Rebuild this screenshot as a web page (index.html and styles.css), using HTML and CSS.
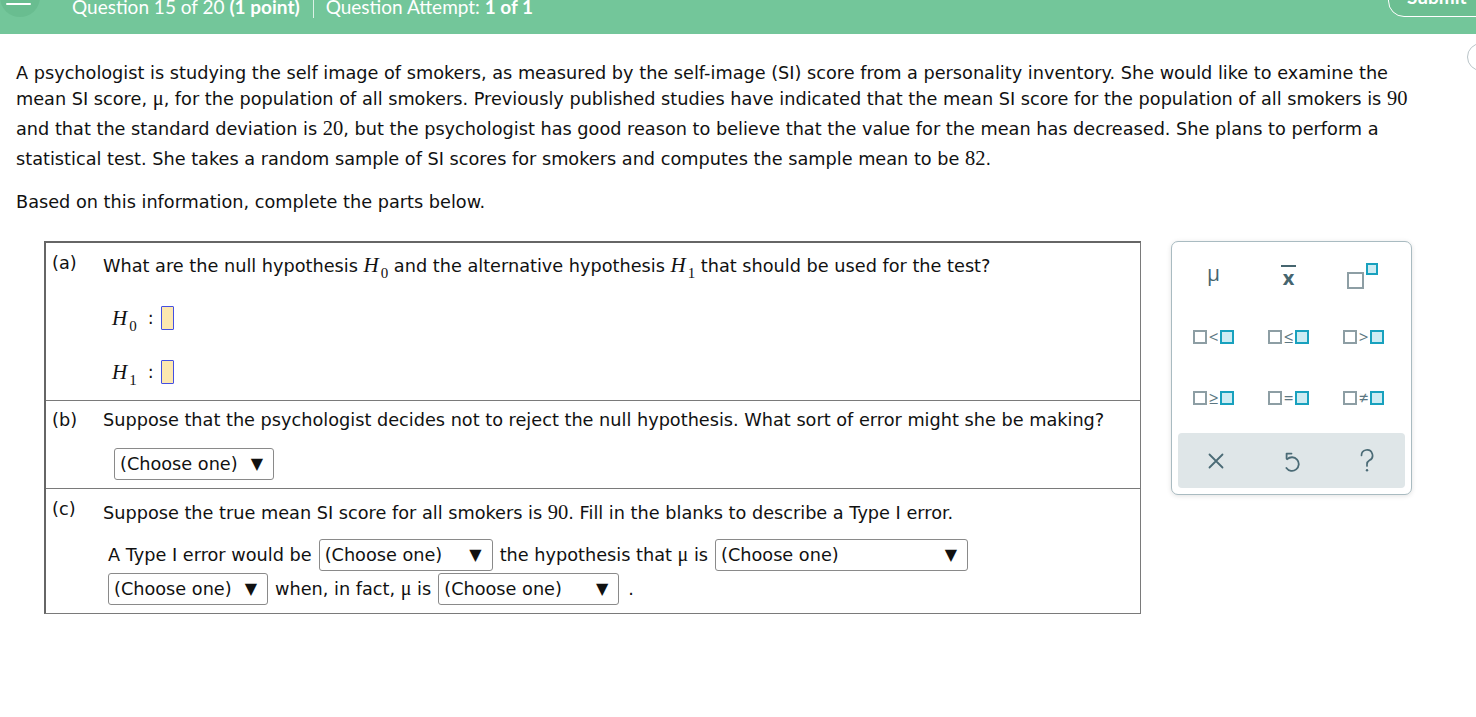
FILE: index.html
```html
<!DOCTYPE html>
<html lang="en">
<head>
<meta charset="utf-8">
<title>Question 15 of 20</title>
<link rel="stylesheet" href="styles.css">
</head>
<body>
<header class="topbar">
  <div class="menu-btn"><span class="menu-line"></span></div>
  <div class="title">Question 15 of 20 <b>(1 point)</b></div>
  <div class="sep"></div>
  <div class="title title-2">Question Attempt: <b>1 of 1</b></div>
  <div class="submit">Submit</div>
</header>
<div class="corner-btn"></div>
<main class="content">
  <div class="question">
    <p class="intro first">A psychologist is studying the self image of smokers, as measured by the self-image (SI) score from a personality inventory. She would like to examine the mean SI score, <span class="m">μ</span>, for the population of all smokers. Previously published studies have indicated that the mean SI score for the population of all smokers is <span class="m">90</span> and that the standard deviation is <span class="m">20</span>, but the psychologist has good reason to believe that the value for the mean has decreased. She plans to perform a statistical test. She takes a random sample of SI scores for smokers and computes the sample mean to be <span class="m">82</span>.</p>
    <p class="intro second">Based on this information, complete the parts below.</p>
  </div>
  <div class="work">
    <div class="parts">
      <div class="part part-a">
        <div class="label">(a)</div>
        <div class="body">
          <div class="q">What are the null hypothesis <span class="hsym">H<sub>0</sub></span> and the alternative hypothesis <span class="hsym">H<sub>1</sub></span> that should be used for the test?</div>
          <div class="hyp hyp-0"><span class="hsym">H<sub>0</sub></span><span class="colon">:</span><span class="blank"></span></div>
          <div class="hyp hyp-1"><span class="hsym">H<sub>1</sub></span><span class="colon">:</span><span class="blank"></span></div>
        </div>
      </div>
      <div class="part part-b">
        <div class="label">(b)</div>
        <div class="body">
          <div class="q">Suppose that the psychologist decides not to reject the null hypothesis. What sort of error might she be making?</div>
          <div class="sel sel-b"><span>(Choose one)</span><span class="arrow">▼</span></div>
        </div>
      </div>
      <div class="part part-c">
        <div class="label">(c)</div>
        <div class="body">
          <div class="q">Suppose the true mean SI score for all smokers is <span class="num">90</span>. Fill in the blanks to describe a Type I error.</div>
          <div class="fill">
            <span>A Type I error would be</span>
            <div class="sel sel-c1"><span>(Choose one)</span><span class="arrow">▼</span></div>
            <span>the hypothesis that <span class="mu">μ</span> is</span>
            <div class="sel sel-c2"><span>(Choose one)</span><span class="arrow">▼</span></div>
            <div class="sel sel-c3"><span>(Choose one)</span><span class="arrow">▼</span></div>
            <span>when, in fact, <span class="mu">μ</span> is</span>
            <div class="sel sel-c4"><span>(Choose one)</span><span class="arrow">▼</span></div>
            <span class="dot">.</span>
          </div>
        </div>
      </div>
    </div>
    <aside class="palette">
      <div class="keys">
        <div class="key"><span class="k-mu">μ</span></div>
        <div class="key"><span class="k-xbar">x</span></div>
        <div class="key"><span class="k-sup"><span class="sq big"></span><span class="sq cy small"></span></span></div>
        <div class="key"><span class="ineq"><span class="sq"></span><span class="op">&lt;</span><span class="sq cy"></span></span></div>
        <div class="key"><span class="ineq"><span class="sq"></span><span class="op">≤</span><span class="sq cy"></span></span></div>
        <div class="key"><span class="ineq"><span class="sq"></span><span class="op">&gt;</span><span class="sq cy"></span></span></div>
        <div class="key"><span class="ineq"><span class="sq"></span><span class="op">≥</span><span class="sq cy"></span></span></div>
        <div class="key"><span class="ineq"><span class="sq"></span><span class="op">=</span><span class="sq cy"></span></span></div>
        <div class="key"><span class="ineq"><span class="sq"></span><span class="op">≠</span><span class="sq cy"></span></span></div>
      </div>
      <div class="bar">
        <div class="bkey">
          <svg width="16" height="16" viewBox="0 0 16 16"><path d="M1.5 1.5 L14.5 14.5 M14.5 1.5 L1.5 14.5" stroke="#4b6b76" stroke-width="1.8" fill="none" stroke-linecap="round"/></svg>
        </div>
        <div class="bkey">
          <svg width="18" height="22" viewBox="0 0 18 22"><path d="M5.2 9.2 A6.8 6.8 0 1 1 4.4 18" stroke="#4b6b76" stroke-width="1.8" fill="none" stroke-linecap="round"/><path d="M9.5 3.6 H4.6 V8.6" stroke="#4b6b76" stroke-width="1.8" fill="none" stroke-linecap="round" stroke-linejoin="round"/></svg>
        </div>
        <div class="bkey">
          <svg width="16" height="24" viewBox="0 0 16 24"><path d="M2.5 6.5 A5.5 5.5 0 1 1 10.5 11.3 C8.8 12.3 8 13.4 8 15.2 V17" stroke="#4b6b76" stroke-width="1.7" fill="none" stroke-linecap="round"/><circle cx="8" cy="21.3" r="1.2" fill="#4b6b76"/></svg>
        </div>
      </div>
    </aside>
  </div>
</main>
</body>
</html>
```
FILE: styles.css
```css
* { box-sizing: border-box; }

body {
  margin: 0;
  font-family: "DejaVu Sans", Verdana, sans-serif;
  font-size: 17.7px;
  color: #111;
  background: #fff;
  overflow: hidden;
}

/* ---------- top bar ---------- */
.topbar {
  position: relative;
  height: 34px;
  background: #73c69a;
  display: flex;
  align-items: flex-start;
  color: #fff;
  font-family: Lato, "Open Sans", sans-serif;
  font-size: 19px;
  overflow: hidden;
}

.menu-btn {
  position: relative;
  flex: none;
  width: 40px;
  height: 40px;
  margin-top: -23px;
  border-radius: 50%;
  background: #69bd90;
}

.menu-line {
  position: absolute;
  left: 6px;
  top: 26px;
  width: 25px;
  height: 2px;
  border-radius: 1px;
  background: #fff;
}

.title {
  margin-top: -2px;
  margin-left: 32px;
  line-height: 18px;
  white-space: nowrap;
}

.title b { font-weight: 700; }

.title-2 { margin-left: 0; }

.sep {
  width: 1px;
  height: 18px;
  margin: 0 12px 0 13px;
  background: rgba(255, 255, 255, 0.75);
}

.submit {
  flex: none;
  margin-left: auto;
  margin-right: -40px;
  margin-top: -33px;
  width: 128px;
  height: 50px;
  padding: 20px 0 0 18px;
  border: 1px solid #fff;
  border-radius: 16px;
  background: #6cbf92;
  font-weight: 700;
  line-height: 18px;
}

.corner-btn {
  position: absolute;
  left: 1467px;
  top: 43px;
  width: 28px;
  height: 28px;
  border-radius: 50%;
  border: 1px solid #b9c4c8;
}

/* ---------- intro ---------- */
.content {
  padding: 26px 16px 0 16px;
}

.question { width: 1402px; }

.intro {
  margin: 0;
  line-height: 26px;
}

.intro.first { margin-bottom: 13px; }
.intro.second { margin-bottom: 26px; }

.m {
  display: inline-block;
  font-family: "Liberation Serif", "Times New Roman", serif;
  font-size: 20.5px;
  line-height: 22px;
  padding-bottom: 7px;
}

.num {
  font-family: "Liberation Serif", "Times New Roman", serif;
  font-size: 20.5px;
  line-height: 1;
}

.mu {
  font-family: "Liberation Serif", "Times New Roman", serif;
  font-size: 20px;
  line-height: 1;
}

/* ---------- work area ---------- */
.work {
  display: flex;
  align-items: flex-start;
  padding-left: 28px;
}

.parts {
  width: 1097px;
  border: 1px solid #7a7a7a;
  border-top: 2px solid #666;
  border-left: 2px solid #666;
}

.part {
  display: grid;
  grid-template-columns: 57px 1fr;
  line-height: 26px;
}

.part + .part { border-top: 1px solid #7a7a7a; }

.label { padding-left: 6px; }

.part-a .label { padding-top: 7px; }
.part-a .body { padding: 10px 0 10px 0; }

.part-b .label { padding-top: 6px; }
.part-b .body { padding: 6px 0 8px 0; }

.part-c .label { padding-top: 7px; }
.part-c .body { padding: 11px 0 8px 0; }

.hsym {
  display: inline-block;
  font-family: "Liberation Serif", "Times New Roman", serif;
  font-style: italic;
  font-size: 21px;
  line-height: 1;
}

.hsym sub {
  font-style: normal;
  font-size: 15px;
  line-height: 0;
  vertical-align: -6px;
  margin-left: 2px;
}

.hyp {
  display: flex;
  align-items: center;
  height: 36px;
  padding-left: 9px;
}

.hyp-0 { margin-top: 21px; }
.hyp-1 { margin-top: 18px; }

.colon {
  margin-left: 11px;
  margin-right: 7px;
}

.blank {
  display: inline-block;
  width: 13px;
  height: 24px;
  background: #fde8b0;
  border: 1.5px solid #4450e2;
  border-radius: 1px;
}

/* ---------- selects ---------- */
.sel {
  display: inline-flex;
  align-items: center;
  justify-content: space-between;
  height: 32px;
  padding: 0 10px 0 5px;
  border: 1px solid #8a8a8a;
  border-radius: 3px;
  background: #fff;
  line-height: 20px;
  white-space: nowrap;
}

.arrow { font-size: 16px; }

.sel-b { width: 160px; margin: 15px 0 0 11px; }
.sel-c1 { width: 174px; }
.sel-c2 { width: 253px; }
.sel-c3 { width: 160px; }
.sel-c4 { width: 181px; }

.fill {
  display: flex;
  flex-wrap: wrap;
  align-items: center;
  column-gap: 7px;
  row-gap: 2px;
  margin: 13px 0 0 5px;
  width: 900px;
  white-space: nowrap;
}

.dot { margin-left: 2px; }

/* ---------- palette ---------- */
.palette {
  flex: none;
  width: 241px;
  height: 254px;
  margin-left: 30px;
  border: 1px solid #a9bbc1;
  border-radius: 7px;
  box-shadow: 0 1px 5px rgba(0, 0, 0, 0.12);
  background: #fff;
}

.keys {
  display: grid;
  grid-template-columns: repeat(3, 75px);
  grid-auto-rows: 61px;
  padding: 3px 0 0 4px;
}

.key {
  display: flex;
  align-items: center;
  justify-content: center;
  color: #46656f;
}

.k-mu {
  font-family: "Open Sans", "DejaVu Sans", sans-serif;
  font-size: 21px;
  line-height: 1;
  margin-top: -4px;
}

.k-xbar {
  display: inline-block;
  font-family: "Open Sans", "DejaVu Sans", sans-serif;
  font-weight: 700;
  font-size: 20px;
  line-height: 16px;
  padding-top: 3px;
  border-top: 2px solid #46656f;
  width: 15px;
  text-align: center;
}

.sq {
  display: inline-block;
  width: 14px;
  height: 14px;
  border: 2px solid #8d9ea4;
  background: #fff;
}

.sq.cy {
  border-color: #18a1be;
  background: #cdecf3;
}

.k-sup {
  display: inline-flex;
  align-items: flex-start;
  margin-left: -2px;
}

.sq.big {
  width: 17px;
  height: 17px;
  margin-top: 9px;
}

.sq.small {
  width: 12px;
  height: 12px;
  margin-left: 2px;
}

.ineq {
  display: inline-flex;
  align-items: center;
}

.op {
  font-family: "Open Sans", "DejaVu Sans", sans-serif;
  font-size: 17px;
  line-height: 14px;
  color: #5b7782;
  margin: 0 2px;
}

.bar {
  display: grid;
  grid-template-columns: repeat(3, 1fr);
  height: 55px;
  margin: 5px 6px 6px 6px;
  border-radius: 4px;
  background: #dfe6e8;
}

.bkey {
  display: flex;
  align-items: center;
  justify-content: center;
}
```
